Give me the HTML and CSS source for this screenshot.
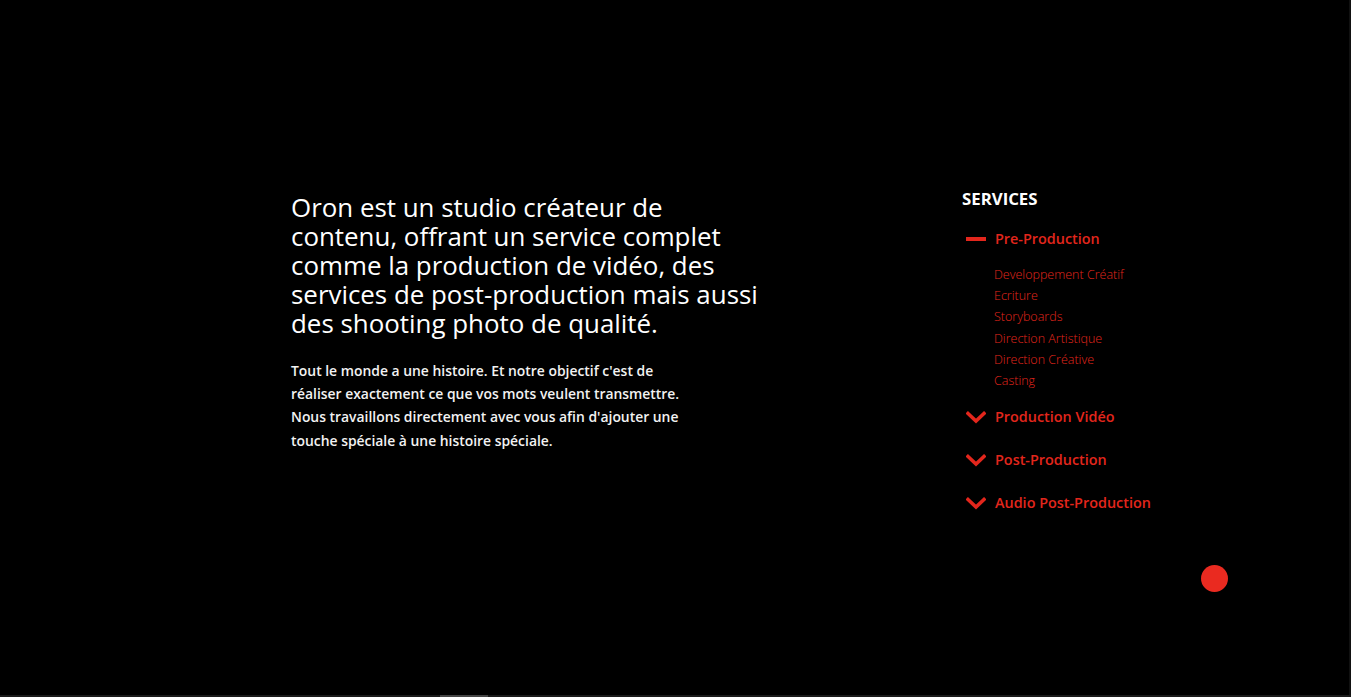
FILE: index.html
```html
<!DOCTYPE html>
<html lang="fr">
<head>
<meta charset="utf-8">
<title>Oron</title>
<link rel="stylesheet" href="styles.css">
</head>
<body>
<main class="page">
  <section class="intro">
    <h1 class="lead">Oron est un studio créateur de<br>contenu, offrant un service complet<br>comme la production de vidéo, des<br>services de post-production mais aussi<br>des shooting photo de qualité.</h1>
    <p class="text">Tout le monde a une histoire. Et notre objectif c'est de réaliser exactement ce que vos mots veulent transmettre. Nous travaillons directement avec vous afin d'ajouter une touche spéciale à une histoire spéciale.</p>
  </section>
  <aside class="services">
    <h2 class="services-title">SERVICES</h2>
    <div class="group open">
      <div class="group-head">
        <span class="icon"><span class="dash"></span></span>
        <span class="group-name">Pre-Production</span>
      </div>
      <ul class="sub">
        <li>Developpement Créatif</li>
        <li>Ecriture</li>
        <li>Storyboards</li>
        <li>Direction Artistique</li>
        <li>Direction Créative</li>
        <li>Casting</li>
      </ul>
    </div>
    <div class="group">
      <div class="group-head">
        <span class="icon"><svg width="20" height="13" viewBox="0 0 20 13"><path d="M2 2.5 L10 10 L18 2.5" fill="none" stroke="#e3261c" stroke-width="3.6" stroke-linecap="square"/></svg></span>
        <span class="group-name">Production Vidéo</span>
      </div>
    </div>
    <div class="group">
      <div class="group-head">
        <span class="icon"><svg width="20" height="13" viewBox="0 0 20 13"><path d="M2 2.5 L10 10 L18 2.5" fill="none" stroke="#e3261c" stroke-width="3.6" stroke-linecap="square"/></svg></span>
        <span class="group-name">Post-Production</span>
      </div>
    </div>
    <div class="group">
      <div class="group-head">
        <span class="icon"><svg width="20" height="13" viewBox="0 0 20 13"><path d="M2 2.5 L10 10 L18 2.5" fill="none" stroke="#e3261c" stroke-width="3.6" stroke-linecap="square"/></svg></span>
        <span class="group-name">Audio Post-Production</span>
      </div>
    </div>
  </aside>
</main>
<div class="dot"></div>
<div class="hscroll"><div class="hthumb"></div></div>
<div class="vscroll"></div>
</body>
</html>
```

FILE: styles.css
```css
html, body {
  margin: 0;
  padding: 0;
  background: #000;
  height: 100%;
  overflow: hidden;
}
body {
  font-family: "Open Sans", "Liberation Sans", sans-serif;
  color: #fff;
}
.page {
  display: flex;
  padding: 188px 0 0 291px;
}
.intro {
  width: 480px;
  padding-top: 5px;
}
.lead {
  margin: 0;
  font-size: 25.9px;
  font-weight: 400;
  line-height: 29px;
  color: #fff;
  white-space: nowrap;
}
.text {
  margin: 21px 0 0;
  width: 400px;
  font-size: 13.9px;
  font-weight: 600;
  line-height: 23.2px;
  color: #f2f2f2;
}
.services {
  margin-left: 191px;
}
.services-title {
  margin: 0;
  font-size: 16.8px;
  font-weight: 700;
  line-height: 22px;
  color: #fff;
}
.group {
  margin-top: 21px;
}
.group:first-of-type {
  margin-top: 18px;
}
.group.open + .group {
  margin-top: 15px;
}
.group-head {
  display: flex;
  align-items: center;
  height: 22px;
}
.icon {
  width: 20px;
  margin-left: 4px;
  margin-right: 9px;
  display: flex;
  align-items: center;
}
.dash {
  display: block;
  width: 20px;
  height: 4px;
  background: #e3261c;
}
.group-name {
  font-size: 14.4px;
  font-weight: 600;
  color: #e3261c;
  line-height: 22px;
}
.sub {
  list-style: none;
  margin: 14px 0 0 32px;
  padding: 0;
}
.sub li {
  font-size: 12.5px;
  font-weight: 300;
  line-height: 21.2px;
  color: #e3261c;
}
.dot {
  position: fixed;
  left: 1201px;
  top: 565px;
  width: 27px;
  height: 27px;
  border-radius: 50%;
  background: #ea2a20;
}
.hscroll {
  position: fixed;
  left: 0;
  right: 0;
  bottom: 0;
  height: 2px;
  background: #1a1a1a;
}
.hthumb {
  margin-left: 440px;
  width: 48px;
  height: 2px;
  background: #444;
}
.vscroll {
  position: fixed;
  top: 0;
  right: 0;
  bottom: 2px;
  width: 2px;
  background: #111;
}
```
